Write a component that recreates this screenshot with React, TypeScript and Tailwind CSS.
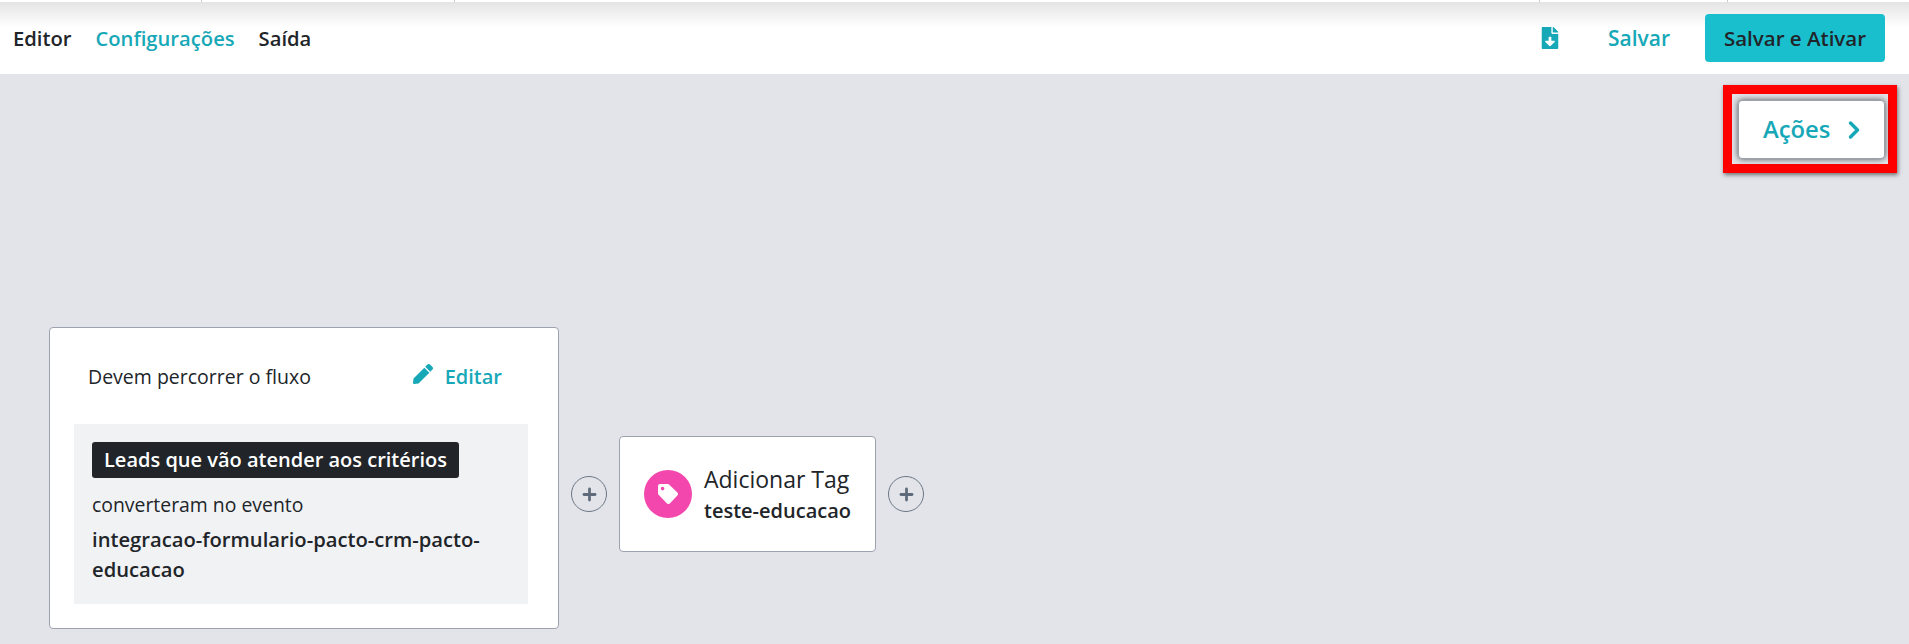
import { ChevronRight, Plus } from "lucide-react";
import { FaFileDownload, FaPen } from "react-icons/fa";

function AddButton() {
  return (
    <div className="w-9 h-9 rounded-full border-[1.5px] border-[#6b7785] flex items-center justify-center text-[#5f6b7a]">
      <Plus size={19} strokeWidth={3.5} />
    </div>
  );
}

function TagIcon() {
  return (
    <svg width="20" height="20" viewBox="0 0 20 20" fill="currentColor">
      <path
        fillRule="evenodd"
        d="M0 2a2 2 0 0 1 2-2h7.6a2 2 0 0 1 1.4.6l8.4 8a2 2 0 0 1 0 2.8l-7.6 8a2 2 0 0 1-2.8 0L.6 10.8A2 2 0 0 1 0 9.4zM4.6 6.4a1.8 1.8 0 1 0 0-3.6 1.8 1.8 0 0 0 0 3.6z"
      />
    </svg>
  );
}

export default function App() {
  return (
    <main className="font-['Open_Sans',sans-serif] w-[1909px] h-[644px] overflow-hidden flex flex-col bg-[#e2e4e9] text-[#212529]">
      {/* strip of the page behind the editor */}
      <div className="h-[2px] bg-white flex">
        <div className="w-[202px] border-r border-[#c9c9c9]" />
        <div className="w-[253px] border-r border-[#c9c9c9]" />
        <div className="w-[1085px] border-r border-[#c9c9c9]" />
        <div className="w-[188px] border-r border-[#c9c9c9]" />
      </div>

      <header className="h-[72px] flex items-center justify-between pl-[13px] pr-[24px] bg-gradient-to-b from-[#e4e4e4] via-white via-[35%] to-white">
        <nav className="flex items-center gap-[24px] text-[20.2px] font-semibold">
          <span>Editor</span>
          <span className="text-[#17a8b8]">Configurações</span>
          <span>Saída</span>
        </nav>
        <div className="flex items-center">
          <FaFileDownload className="text-[#17a8b8] text-[22px] mr-[47px]" />
          <span className="text-[21px] font-semibold text-[#17a8b8] mr-[35px] pt-[1px]">Salvar</span>
          <button className="w-[180px] h-[48px] rounded bg-[#1abfcd] text-[20.5px] font-semibold">Salvar e Ativar</button>
        </div>
      </header>

      <section className="relative flex-1">
        {/* highlighted Ações button */}
        <div className="absolute left-[1723px] top-[11px] w-[174px] h-[88px] border-[9px] border-[#ff0000] shadow-[1px_2px_4px_rgba(0,0,0,0.5)] bg-[#e2e4e9] pl-[6px] pt-[6px]">
          <div className="w-[147px] h-[59px] rounded border border-[#9aa1ab] bg-white shadow-[0_0_6px_rgba(0,0,0,0.65)] flex items-center pl-[24px] gap-[10px] text-[#17a8b8]">
            <span className="text-[23.8px] font-semibold">Ações</span>
            <ChevronRight size={28} strokeWidth={3} />
          </div>
        </div>

        {/* start node */}
        <div className="absolute left-[49px] top-[253px] w-[510px] h-[302px] rounded border border-[#9ca3af] bg-white pt-[29px] px-[24px]">
          <div className="flex items-center justify-between pl-[14px] pr-[32px] h-[40px]">
            <span className="text-[19.5px]">Devem percorrer o fluxo</span>
            <span className="flex items-center gap-[12px] text-[#17a8b8] text-[20px] font-semibold">
              <FaPen className="text-[20px] -mt-[6px]" />
              Editar
            </span>
          </div>
          <div className="mt-[27px] w-[454px] h-[180px] bg-[#f1f2f4] pt-[18px] px-[18px]">
            <span className="inline-block h-[36px] leading-[35px] px-[12px] rounded-[3px] bg-[#212529] text-white text-[20px] font-semibold whitespace-nowrap">
              Leads que vão atender aos critérios
            </span>
            <p className="mt-[13px] text-[19.4px] leading-[27px]">converteram no evento</p>
            <p className="mt-[6px] text-[20.2px] leading-[30px] font-semibold break-words">
              integracao-formulario-pacto-crm-pacto-educacao
            </p>
          </div>
        </div>

        {/* add tag branch */}
        <div className="absolute left-[571px] top-[362px] flex items-center gap-[12px]">
          <AddButton />
          <div className="w-[257px] h-[116px] rounded border border-[#9ca3af] bg-white flex items-center pl-[24px] gap-[12px]">
            <div className="w-[48px] h-[48px] rounded-full bg-[#f347ae] flex items-center justify-center text-white">
              <TagIcon />
            </div>
            <div>
              <div className="text-[23px] leading-[32px]">Adicionar Tag</div>
              <div className="text-[20px] leading-[31px] font-semibold">teste-educacao</div>
            </div>
          </div>
          <AddButton />
        </div>
      </section>
    </main>
  );
}
